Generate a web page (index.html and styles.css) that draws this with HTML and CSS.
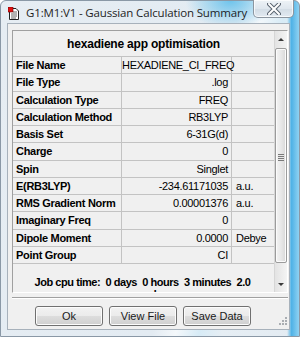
FILE: index.html
```html
<!DOCTYPE html>
<html lang="en">
<head>
    <meta charset="UTF-8">
    <title>G1:M1:V1 - Gaussian Calculation Summary</title>
    <link rel="stylesheet" href="styles.css">
</head>
<body>
    <div class="window">
        <div class="titlebar">
            <svg class="app-icon" width="12" height="14" viewBox="0 0 12 14">
                <path d="M1.5,1.5 H8 L10.5,4 V12.5 H1.5 Z" fill="#fff" stroke="#222" stroke-width="1"/>
                <path d="M3,7 H9 M3,9 H9 M3,11 H8 M5,5 H9" stroke="#666" stroke-width="1"/>
                <rect x="0" y="0" width="5" height="5" fill="#e01010" stroke="#600" stroke-width="0.6"/>
            </svg>
            <span class="title">G1:M1:V1 - Gaussian Calculation Summary</span>
            <div class="close-btn">
                <svg width="14" height="12" viewBox="0 0 14 12">
                    <path d="M2,1 L12,11 M12,1 L2,11" stroke="#5a6470" stroke-width="4" stroke-linecap="round"/>
                    <path d="M2,1 L12,11 M12,1 L2,11" stroke="#fff" stroke-width="2" stroke-linecap="round"/>
                </svg>
            </div>
        </div>

        <div class="client">
            <div class="panel">
                <div class="sheet">
                    <div class="sheet-title">hexadiene app optimisation</div>
                    <div class="row"><div class="label">File Name</div><div class="value">HEXADIENE_CI_FREQ</div><div class="unit"></div></div>
                    <div class="row"><div class="label">File Type</div><div class="value">.log</div><div class="unit"></div></div>
                    <div class="row"><div class="label">Calculation Type</div><div class="value">FREQ</div><div class="unit"></div></div>
                    <div class="row"><div class="label">Calculation Method</div><div class="value">RB3LYP</div><div class="unit"></div></div>
                    <div class="row"><div class="label">Basis Set</div><div class="value">6-31G(d)</div><div class="unit"></div></div>
                    <div class="row"><div class="label">Charge</div><div class="value">0</div><div class="unit"></div></div>
                    <div class="row"><div class="label">Spin</div><div class="value">Singlet</div><div class="unit"></div></div>
                    <div class="row"><div class="label">E(RB3LYP)</div><div class="value">-234.61171035</div><div class="unit">a.u.</div></div>
                    <div class="row"><div class="label">RMS Gradient Norm</div><div class="value">0.00001376</div><div class="unit">a.u.</div></div>
                    <div class="row"><div class="label">Imaginary Freq</div><div class="value">0</div><div class="unit"></div></div>
                    <div class="row"><div class="label">Dipole Moment</div><div class="value">0.0000</div><div class="unit">Debye</div></div>
                    <div class="row"><div class="label">Point Group</div><div class="value">CI</div><div class="unit"></div></div>
                    <div class="cpu-time">Job cpu time:&nbsp; 0 days&nbsp; 0 hours&nbsp; 3 minutes&nbsp; 2.0<br>seconds.</div>
                </div>
                <div class="scrollbar">
                    <div class="arrow arrow-up"></div>
                    <div class="track">
                        <div class="thumb"><span class="thumb-grip"></span></div>
                    </div>
                    <div class="arrow arrow-down"></div>
                </div>
            </div>

            <div class="separator"></div>

            <div class="buttons">
                <button class="btn">Ok</button>
                <button class="btn">View File</button>
                <button class="btn">Save Data</button>
            </div>

            <svg class="size-grip" width="8" height="8" viewBox="0 0 8 8" fill="#a9adb2">
                <rect x="6" y="0" width="2" height="2"/>
                <rect x="3" y="3" width="2" height="2"/>
                <rect x="6" y="3" width="2" height="2"/>
                <rect x="0" y="6" width="2" height="2"/>
                <rect x="3" y="6" width="2" height="2"/>
                <rect x="6" y="6" width="2" height="2"/>
            </svg>
        </div>
    </div>
</body>
</html>
```

FILE: styles.css
```css
* {
    margin: 0;
    padding: 0;
    box-sizing: border-box;
}

body {
    font-family: "Liberation Sans", Arial, sans-serif;
    background: #fff;
    width: 300px;
    height: 338px;
    overflow: hidden;
}

.window {
    width: 300px;
    height: 337px;
    padding: 0 9px 6px 6px;
    border: 1px solid #8a98a6;
    border-radius: 6px 6px 0 0;
    background:
        linear-gradient(to right, rgba(82, 181, 232, 0) 96%, #4fb2e6 97.5%, #8fd2f2 100%),
        radial-gradient(ellipse 45px 28px at 77% 0%, #6fc4ec 0%, rgba(111, 196, 236, 0) 100%),
        linear-gradient(105deg, #e6edf3 0%, #e3ebf2 62%, #f4f8fb 68%, #d7ebf6 74%, #e6eef4 80%, #e3ebf2 100%);
    display: flex;
    flex-direction: column;
}

.titlebar {
    height: 22px;
    display: flex;
    align-items: flex-start;
    flex-shrink: 0;
}

.app-icon {
    margin: 6px 0 0 1px;
    flex-shrink: 0;
}

.title {
    margin: 4px 0 0 6px;
    font-family: "Open Sans", "Noto Sans", sans-serif;
    font-size: 11.5px;
    letter-spacing: -0.15px;
    color: #1e1e1e;
    white-space: nowrap;
    flex: 1;
}

.close-btn {
    width: 41px;
    height: 18px;
    margin: -1px -4px 0 0;
    border: 1px solid #8c96a0;
    border-top: none;
    border-radius: 0 0 5px 5px;
    background: linear-gradient(#eef3f7, #dfe7ee 50%, #d2dce5 51%, #e2eaf1);
    box-shadow: inset 0 0 0 1px rgba(255, 255, 255, 0.7);
    display: flex;
    align-items: center;
    justify-content: center;
    flex-shrink: 0;
}

.client {
    position: relative;
    height: 307px;
    background: #f0f0f0;
    border: 1px solid #a7b1bb;
    padding: 6px 1px 0 4px;
    display: flex;
    flex-direction: column;
}

.panel {
    height: 263px;
    width: 276px;
    border: 1px solid;
    border-color: #a0a0a0 #fff #fff #a0a0a0;
    display: flex;
    flex-shrink: 0;
}

.sheet {
    flex: 1;
    overflow: hidden;
    font-size: 11px;
    letter-spacing: -0.3px;
    color: #000;
}

.sheet-title {
    height: 26px;
    border-bottom: 1px solid #c3c3c3;
    font-weight: bold;
    font-size: 12px;
    letter-spacing: -0.2px;
    text-align: center;
    padding-top: 6px;
}

.row {
    display: grid;
    grid-template-columns: 109px 110px 1fr;
    height: 17.27px;
    border-bottom: 1px solid #c3c3c3;
    line-height: 16px;
}

.label {
    font-weight: bold;
    padding-left: 3px;
    border-right: 1px solid #c3c3c3;
    white-space: nowrap;
}

.value {
    text-align: right;
    padding-right: 3px;
    border-right: 1px solid #c3c3c3;
    white-space: nowrap;
}

.unit {
    padding-left: 4px;
    white-space: nowrap;
}

.cpu-time {
    margin-top: 12px;
    font-weight: bold;
    font-size: 11px;
    letter-spacing: -0.45px;
    line-height: 12px;
    text-align: center;
    white-space: nowrap;
    padding-right: 2px;
}

.scrollbar {
    width: 13px;
    border-left: 1px solid #d6d6d6;
    background: linear-gradient(to right, #e3e3e3, #f4f4f4);
    display: flex;
    flex-direction: column;
}

.arrow {
    height: 17px;
    flex-shrink: 0;
    position: relative;
}

.arrow::after {
    content: "";
    position: absolute;
    left: 3px;
    border-left: 3px solid transparent;
    border-right: 3px solid transparent;
}

.arrow-up::after {
    top: 7px;
    border-bottom: 3px solid #3a3a3a;
}

.arrow-down::after {
    top: 8px;
    border-top: 3px solid #3a3a3a;
}

.track {
    flex: 1;
    padding-bottom: 12px;
}

.thumb {
    height: 100%;
    border: 1px solid #9b9b9b;
    border-radius: 2px;
    background: linear-gradient(to right, #f3f3f3, #e8e8e8 50%, #d8d8d8);
    box-shadow: inset 0 0 0 1px #fbfbfb;
    display: flex;
    align-items: center;
    justify-content: center;
}

.thumb-grip {
    width: 6px;
    height: 7px;
    margin-top: 4px;
    background: repeating-linear-gradient(#7a7a7a 0, #7a7a7a 1px, #e8e8e8 1px, #e8e8e8 2px);
}

.separator {
    margin-top: 4px;
    width: 276px;
    border-top: 1px solid #a0a0a0;
    border-bottom: 1px solid #fff;
}

.buttons {
    display: flex;
    gap: 6px;
    padding: 7px 0 0 23px;
}

.btn {
    width: 68px;
    height: 20px;
    font-family: "Liberation Sans", Arial, sans-serif;
    font-size: 11px;
    line-height: 18px;
    color: #1a1a1a;
    border: 1px solid #707070;
    border-radius: 3px;
    background: linear-gradient(#f2f2f2, #ebebeb 50%, #dddddd 51%, #cfcfcf);
    box-shadow: inset 0 0 0 1px #fcfcfc;
}

.size-grip {
    position: absolute;
    right: 2px;
    bottom: 4px;
}
```
